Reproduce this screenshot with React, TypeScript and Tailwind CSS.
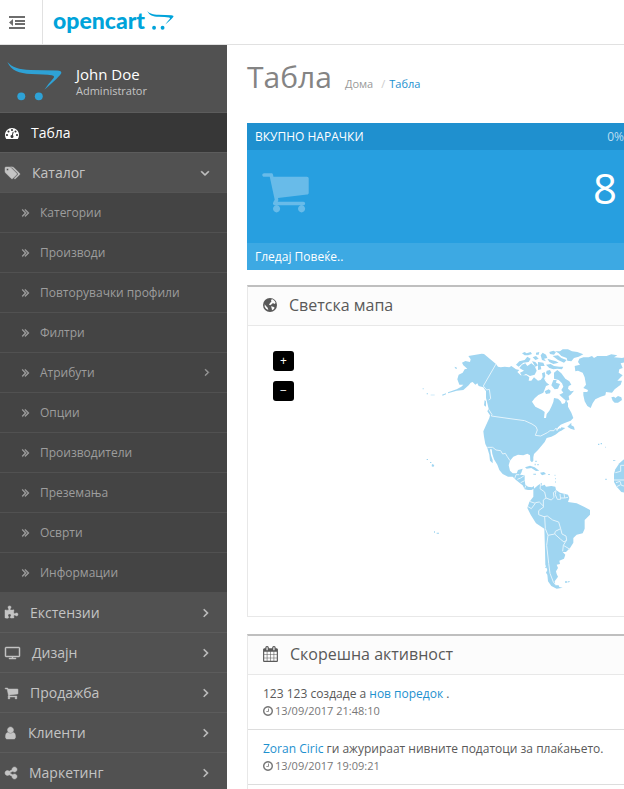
import React from "react";

interface Glyph {
  box: string;
  d: string;
}

interface MenuItem {
  label: string;
  icon: Glyph;
  width: string;
}

// Icon outlines, drawn on a 1792 unit em
const GLYPHS = {
  dashboard: {
    box: "0 0 1792 1792",
    d: "M384 1152q0-53-37.5-90.5t-90.5-37.5-90.5 37.5-37.5 90.5 37.5 90.5 90.5 37.5 90.5-37.5 37.5-90.5zm192-448q0-53-37.5-90.5t-90.5-37.5-90.5 37.5-37.5 90.5 37.5 90.5 90.5 37.5 90.5-37.5 37.5-90.5zm428 481l101-382q6-26-7.5-48.5t-38.5-29.5-48 6.5-30 39.5l-101 382q-60 5-107 43.5t-63 98.5q-20 77 20 146t117 89 146-20 89-117q16-60-6-117t-72-91zm660-33q0-53-37.5-90.5t-90.5-37.5-90.5 37.5-37.5 90.5 37.5 90.5 90.5 37.5 90.5-37.5 37.5-90.5zm-640-640q0-53-37.5-90.5t-90.5-37.5-90.5 37.5-37.5 90.5 37.5 90.5 90.5 37.5 90.5-37.5 37.5-90.5zm448 192q0-53-37.5-90.5t-90.5-37.5-90.5 37.5-37.5 90.5 37.5 90.5 90.5 37.5 90.5-37.5 37.5-90.5zm320 448q0 261-141 483-19 29-54 29h-1402q-35 0-54-29-141-221-141-483 0-182 71-348t191-286 286-191 348-71 348 71 286 191 191 286 71 348z",
  },
  tags: {
    box: "0 0 1920 1792",
    d: "M448 448q0-53-37.5-90.5t-90.5-37.5-90.5 37.5-37.5 90.5 37.5 90.5 90.5 37.5 90.5-37.5 37.5-90.5zm1067 576q0 53-37 90l-491 492q-39 37-91 37-53 0-90-37l-715-716q-38-37-64.5-101t-26.5-117v-416q0-52 38-90t90-38h416q53 0 117 26.5t102 64.5l715 714q37 39 37 91zm384 0q0 53-37 90l-491 492q-39 37-91 37-36 0-59-14t-53-45l470-470q37-37 37-90 0-52-37-91l-715-714q-38-38-102-64.5t-117-26.5h224q53 0 117 26.5t102 64.5l715 714q37 39 37 91z",
  },
  puzzle: {
    box: "91 0 1664 1792",
    d: "M1755 1083q0 81-44.5 135t-123.5 54q-41 0-77.5-17.5t-59-38-56.5-38-71-17.5q-110 0-110 124 0 39 16 115t15 115v5q-22 0-33 1-34 3-97.5 11.5t-115.5 13.5-98 5q-61 0-103-26.5t-42-83.5q0-37 17.5-71t38-56.5 38-59 17.5-77.5q0-79-54-123.5t-135-44.5q-84 0-143 45.5t-59 127.5q0 43 15 83t33.5 64.5 33.5 53 15 50.5q0 45-46 89-37 35-117 35-95 0-245-24-9-2-27.5-4t-27.5-4l-13-2q-1 0-3-1-2 0-2-1v-1024q2 1 17.5 3.5t34 5 21.5 3.5q150 24 245 24 80 0 117-35 46-44 46-89 0-22-15-50.5t-33.5-53-33.5-64.5-15-83q0-82 59-127.5t144-45.5q80 0 134 44.5t54 123.5q0 41-17.5 77.5t-38 59-38 56.5-17.5 71q0 57 42 83.5t103 26.5q64 0 180-15t163-17v2q-1 2-3.5 17.5t-5 34-3.5 21.5q-24 150-24 245 0 80 35 117 44 46 89 46 22 0 50.5-15t53-33.5 64.5-33.5 83-15q82 0 127.5 59t45.5 143z",
  },
  screen: {
    box: "0 0 1920 1792",
    d: "M1792 1248v-960q0-13-9.5-22.5t-22.5-9.5h-1600q-13 0-22.5 9.5t-9.5 22.5v960q0 13 9.5 22.5t22.5 9.5h1600q13 0 22.5-9.5t9.5-22.5zm128-960v960q0 66-47 113t-113 47h-736v128h352q14 0 23 9t9 23v64q0 14-9 23t-23 9h-832q-14 0-23-9t-9-23v-64q0-14 9-23t23-9h352v-128h-736q-66 0-113-47t-47-113v-960q0-66 47-113t113-47h1600q66 0 113 47t47 113z",
  },
  cart: {
    box: "64 0 1664 1792",
    d: "M704 1536q0 52-38 90t-90 38-90-38-38-90 38-90 90-38 90 38 38 90zm896 0q0 52-38 90t-90 38-90-38-38-90 38-90 90-38 90 38 38 90zm128-1088v512q0 24-16.5 42.5t-40.5 21.5l-1044 122q13 60 13 70 0 16-24 64h920q26 0 45 19t19 45-19 45-45 19h-1024q-26 0-45-19t-19-45q0-11 8-31.5t16-36 21.5-40 15.5-29.5l-177-823h-204q-26 0-45-19t-19-45 19-45 45-19h256q16 0 28.5 6.5t19.5 15.5 13 24.5 8 26 5.5 29.5 4.5 26h1201q26 0 45 19t19 45z",
  },
  user: {
    box: "256 0 1280 1792",
    d: "M1536 1399q0 109-62.5 187t-150.5 78h-854q-88 0-150.5-78t-62.5-187q0-85 8.5-160.5t31.5-152 58.5-131 94-89 134.5-34.5q131 128 313 128t313-128q76 0 134.5 34.5t94 89 58.5 131 31.5 152 8.5 160.5zm-256-887q0 159-112.5 271.5t-271.5 112.5-271.5-112.5-112.5-271.5 112.5-271.5 271.5-112.5 271.5 112.5 112.5 271.5z",
  },
  share: {
    box: "128 0 1536 1792",
    d: "M1344 1024q133 0 226.5 93.5t93.5 226.5-93.5 226.5-226.5 93.5-226.5-93.5-93.5-226.5q0-12 2-34l-360-180q-92 86-218 86-133 0-226.5-93.5t-93.5-226.5 93.5-226.5 226.5-93.5q126 0 218 86l360-180q-2-22-2-34 0-133 93.5-226.5t226.5-93.5 226.5 93.5 93.5 226.5-93.5 226.5-226.5 93.5q-126 0-218-86l-360 180q2 22 2 34t-2 34l360 180q92-86 218-86z",
  },
  angleRight: {
    box: "0 0 1792 1792",
    d: "M1171 960q0 13-10 23l-466 466q-10 10-23 10t-23-10l-50-50q-10-10-10-23t10-23l393-393-393-393q-10-10-10-23t10-23l50-50q10-10 23-10t23 10l466 466q10 10 10 23z",
  },
  angleDown: {
    box: "0 0 1792 1792",
    d: "M1395 736q0 13-10 23l-466 466q-10 10-23 10t-23-10l-466-466q-10-10-10-23t10-23l50-50q10-10 23-10t23 10l393 393 393-393q10-10 23-10t23 10l50 50q10 10 10 23z",
  },
  angles: {
    box: "300 0 1152 1792",
    d: "M979 960q0 13-10 23l-466 466q-10 10-23 10t-23-10l-50-50q-10-10-10-23t10-23l393-393-393-393q-10-10-10-23t10-23l50-50q10-10 23-10t23 10l466 466q10 10 10 23zm384 0q0 13-10 23l-466 466q-10 10-23 10t-23-10l-50-50q-10-10-10-23t10-23l393-393-393-393q-10-10-10-23t10-23l50-50q10-10 23-10t23 10l466 466q10 10 10 23z",
  },
  clock: {
    box: "128 0 1536 1792",
    d: "M1024 544v448q0 14-9 23t-23 9h-320q-14 0-23-9t-9-23v-64q0-14 9-23t23-9h224v-352q0-14 9-23t23-9h64q14 0 23 9t9 23zm416 352q0-148-73-273t-198-198-273-73-273 73-198 198-73 273 73 273 198 198 273 73 273-73 198-198 73-273zm224 0q0 209-103 385.5t-279.5 279.5-385.5 103-385.5-103-279.5-279.5-103-385.5 103-385.5 279.5-279.5 385.5-103 385.5 103 279.5 279.5 103 385.5z",
  },
  calendar: {
    box: "64 0 1664 1792",
    d: "M192 1664h288v-288h-288v288zm352 0h320v-288h-320v288zm-352-352h288v-320h-288v320zm352 0h320v-320h-320v320zm-352-384h288v-288h-288v288zm736 736h320v-288h-320v288zm-384-736h320v-288h-320v288zm768 736h288v-288h-288v288zm-384-352h320v-320h-320v320zm-352-864v-288q0-13-9.5-22.5t-22.5-9.5h-64q-13 0-22.5 9.5t-9.5 22.5v288q0 13 9.5 22.5t22.5 9.5h64q13 0 22.5-9.5t9.5-22.5zm736 864h288v-320h-288v320zm-384-384h320v-288h-320v288zm384 0h288v-288h-288v288zm32-480v-288q0-13-9.5-22.5t-22.5-9.5h-64q-13 0-22.5 9.5t-9.5 22.5v288q0 13 9.5 22.5t22.5 9.5h64q13 0 22.5-9.5t9.5-22.5zm384-64v1280q0 52-38 90t-90 38h-1408q-52 0-90-38t-38-90v-1280q0-52 38-90t90-38h128v-96q0-66 47-113t113-47h64q66 0 113 47t47 113v96h384v-96q0-66 47-113t113-47h64q66 0 113 47t47 113v96h128q52 0 90 38t38 90z",
  },
};

const CATALOG = [
  "Категории",
  "Производи",
  "Повторувачки профили",
  "Филтри",
  "Атрибути",
  "Опции",
  "Производители",
  "Преземања",
  "Осврти",
  "Информации",
];

const SECTIONS: MenuItem[] = [
  { label: "Екстензии", icon: GLYPHS.puzzle, width: "w-[13px]" },
  { label: "Дизајн", icon: GLYPHS.screen, width: "w-[15px]" },
  { label: "Продажба", icon: GLYPHS.cart, width: "w-[13px]" },
  { label: "Клиенти", icon: GLYPHS.user, width: "w-[11px]" },
  { label: "Маркетинг", icon: GLYPHS.share, width: "w-[12px]" },
];

function Icon({
  glyph,
  className,
  weight = 0,
}: {
  glyph: Glyph;
  className: string;
  weight?: number;
}) {
  return (
    <svg
      viewBox={glyph.box}
      className={`shrink-0 overflow-visible ${className}`}
      fill="currentColor"
      stroke="currentColor"
      strokeWidth={weight}
      aria-hidden="true"
    >
      <path d={glyph.d} />
    </svg>
  );
}

function CartMark({ className }: { className: string }) {
  return (
    <svg viewBox="0 0 164 118" className={className} fill="currentColor" aria-hidden="true">
      <path d="M0 0C14 16 34 23 70 24L150 26Q165 27 163 34Q160 42 112 84Q122 68 138 51Q146 42 134 40Q112 37 72 36C34 35 12 26 0 0Z" />
      <circle cx="42" cy="104" r="12" />
      <circle cx="95" cy="104" r="12" />
    </svg>
  );
}

function Globe() {
  return (
    <svg viewBox="0 0 42 42" className="h-3.5 w-3.5" aria-hidden="true">
      <circle cx="21" cy="21" r="21" fill="#595959" />
      <path
        d="M24 5L29 4L35 9L38 15L34 18L30 15L26 19L22 22L18 20L21 15L25 11ZM24 25L31 26L35 29L32 34L27 37L26 31ZM5 19L9 24L14 29L16 36L9 32L5 26Z"
        fill="#fcfcfc"
      />
    </svg>
  );
}

function Sidebar() {
  return (
    <aside className="w-[227px] shrink-0 bg-[#515151]">
      <div className="flex h-17 border-b border-[#5c5c5c] pl-[7px] pt-[17px]">
        <CartMark className="h-[39px] w-[55px] text-[#2ea2d6]" />
        <div className="pl-3.5 pt-0.5">
          <h4 className="text-[15px] leading-5 text-white">John Doe</h4>
          <small className="block text-[11px] leading-3.5 text-[#c4c4c4]">Administrator</small>
        </div>
      </div>
      <nav className="text-sm text-[#c4c4c4]">
        <a
          href="#dashboard"
          className="flex h-10 items-center gap-3 border-b border-[#5c5c5c] bg-[#373737] pl-[5px] text-white"
        >
          <Icon glyph={GLYPHS.dashboard} className="h-3.5 w-3.5" />
          Табла
        </a>
        <a
          href="#catalog"
          className="flex h-10 items-center gap-3 border-b border-[#555555] pl-[5px] pr-[15px]"
        >
          <Icon glyph={GLYPHS.tags} className="h-3.5 w-[15px]" weight={60} />
          Каталог
          <Icon glyph={GLYPHS.angleDown} className="ml-auto h-3.5 w-3.5" weight={80} />
        </a>
        <ul className="bg-[#444444] text-xs text-[#9d9d9d]">
          {CATALOG.map((label) => (
            <li key={label}>
              <a
                href="#catalog"
                className="flex h-10 items-center gap-2.5 border-b border-[#515151] pl-[21px] pr-3.5"
              >
                <Icon glyph={GLYPHS.angles} className="h-3.5 w-[9px] pb-px" weight={80} />
                {label}
                {label === "Атрибути" && (
                  <Icon glyph={GLYPHS.angleRight} className="ml-auto h-3.5 w-3 pb-0.5" weight={80} />
                )}
              </a>
            </li>
          ))}
        </ul>
        {SECTIONS.map((item) => (
          <a
            key={item.label}
            href="#section"
            className="flex h-10 items-center gap-3 border-b border-[#5c5c5c] pl-[5px] pr-3.5"
          >
            <Icon glyph={item.icon} className={`h-3.5 ${item.width}`} weight={60} />
            {item.label}
            <Icon glyph={GLYPHS.angleRight} className="ml-auto h-4 w-3.5 pb-px" weight={80} />
          </a>
        ))}
      </nav>
    </aside>
  );
}

// Land and borders share one grid, three units to a pixel
function WorldMap() {
  return (
    <svg
      viewBox="-486 -42 1149 870"
      preserveAspectRatio="xMinYMin slice"
      className="block h-[290px] w-full"
      role="img"
      aria-label="Светска мапа"
    >
      <g fill="#9fd5f1">
        <path d="M175 48L215 41L222 42L258 72L264 80L272 82L284 80L298 82L304 78L318 88L328 90L322 96L332 106L350 106L358 112L356 122L364 122L372 112L384 122L392 120L398 112L396 100L404 96L406 108L402 118L410 128L418 134L408 138L400 158L385 165L374 175L366 185L376 200L396 210L404 216L402 234L408 234L410 222L418 212L424 200L430 186L432 174L444 176L452 184L456 192L464 190L468 180L474 190L474 200L484 218L490 234L482 242L466 248L452 254L444 262L438 272L450 264L452 270L444 278L436 284L424 290L410 294L404 306L394 318L384 330L372 342L370 352L370 362L366 367L361 362L360 346L352 341L340 346L324 344L310 350L300 362L296 376L300 392L308 400L320 400L324 390L338 386L334 398L330 404L344 406L344 420L346 434L354 440L366 442L372 438L372 446L364 450L354 450L344 448L338 436L330 430L318 420L308 410L294 410L278 402L268 390L262 374L252 358L247 342L245 328L240 328L243 346L248 360L248 370L240 362L238 344L232 324L226 312L222 290L220 274L228 256L238 234L240 226L232 214L236 206L232 190L228 174L228 154L220 142L206 138L202 130L196 134L188 126L182 128L176 136L160 150L140 152L114 160L114 157L140 148L154 140L160 134L148 134L142 118L146 104L158 98L164 88L172 86L160 76L156 68L166 63L180 66L182 58Z" />
        <path d="M370 448L384 436L396 428L394 438L404 434L408 440L424 438L436 440L438 450L450 458L474 464L478 474L474 486L500 490L522 500L540 510L540 524L524 540L524 566L518 580L500 584L490 594L490 608L480 624L468 636L458 636L466 644L462 656L448 662L450 672L440 674L444 684L438 694L440 702L444 710L434 724L436 736L446 736L448 741L458 743L440 746L424 738L414 724L412 704L408 698L412 690L406 674L405 630L403 566L378 550L362 524L352 504L358 486L370 470Z" />
        <path d="M494 78L510 74L504 66L508 56L520 52L536 52L546 48L552 54L562 48L590 48L604 43L622 46L612 52L636 54L650 50L650 66L632 70L638 84L628 88L626 98L638 106L622 122L636 122L632 134L614 148L606 158L588 156L586 166L572 170L556 178L548 190L542 204L532 198L524 184L520 166L520 156L532 156L534 150L520 144L528 134L524 112L518 98L504 92L496 94Z" />
        {/* Canadian Arctic */}
        <path d="M318 74L328 64L344 60L352 50L362 56L356 66L340 68L326 80ZM336 74L346 70L352 78L364 70L374 78L380 92L374 104L360 108L348 102L336 108L330 98L342 92L328 84ZM336 40L344 36L350 40L362 36L366 42L354 46L344 46ZM368 52L378 48L386 56L376 60ZM366 64L376 66L384 76L376 80ZM378 38L388 36L386 44L378 44ZM392 46L398 38L408 44L412 54L402 56L408 64L396 60ZM384 66L400 68L404 78L392 78L394 88L384 90ZM408 74L422 72L432 78L448 80L460 80L456 88L442 86L430 88L418 84ZM412 56L424 60L438 64L446 68L430 72L418 66ZM418 36L430 32L438 36L432 44L420 42ZM428 48L444 46L454 54L470 60L462 68L444 60ZM436 34L450 34L458 28L474 28L486 34L502 36L520 43L506 50L492 54L484 64L472 62L470 54L454 48L446 40Z" />
        <path d="M410 92L420 90L424 98L416 106L408 100ZM432 98L442 90L454 100L466 116L478 124L484 134L476 138L474 146L482 154L492 152L482 164L476 168L478 180L468 182L456 172L448 164L460 158L454 150L460 140L456 130L446 120L432 116ZM430 120L440 120L438 128L450 132L444 146L434 148L424 136ZM404 154L416 148L422 152L420 160L408 162ZM394 122L406 118L402 128L394 130Z" />
        <path d="M604 172L612 170L616 174L624 168L634 172L636 180L624 188L614 188L608 182ZM472 260L484 248L484 256L492 260L494 270L482 266ZM444 276L454 262L466 264L454 272ZM345 382L360 377L374 382L388 392L378 393L364 384L350 386ZM390 398L402 396L408 402L396 406ZM370 401L378 401L378 404L370 404ZM414 402L420 402L420 404L414 404Z" />
        <path d="M642 358L628 370L616 388L612 402L612 426L620 440L634 456L662 462V350Z" />
        {/* Pacific and Atlantic islands */}
        <path d="M66 372L73 375L70 381L65 379ZM60 366H64V369H60ZM50 357H54V360H50ZM134 80L141 83L140 87L135 85ZM38 145H41V148H38ZM50 160H54V163H50ZM62 164H74V166H62ZM96 164L108 160V163L98 167ZM224 180L228 184V200L222 196ZM72 574H75V578H72ZM80 578H87V581H80ZM465 724H472V728H465ZM474 723L480 724L476 728ZM406 680H410V684H406ZM564 311H568V315H564ZM572 309H576V313H572ZM586 320H588V323H586ZM376 362H380V366H376ZM382 372H386V376H382ZM374 371H377V376H374ZM434 404H436V408H434ZM436 414H438V418H436ZM436 424H438V428H436ZM609 361H616V363H609ZM586 416H590V420H586Z" />
      </g>
      <g fill="none" stroke="#e4f4fc" strokeWidth="3" strokeLinejoin="round">
        <path d="M258 72L220 138L230 150L238 148L242 176L236 180M236 208L246 224L244 228L300 236L344 242L366 252L378 260L382 270L376 286L392 288L412 278L420 272L432 272L438 264L442 272" />
        <path d="M232 322L248 322L258 330L272 332L278 342L286 340L292 350L300 362M314 416L318 404L328 404M322 418L332 414L344 406M332 428L344 422M344 446L348 436" />
        <path d="M392 430L390 446L404 456L408 474L400 480L400 500M408 474L424 480L432 472L430 458L438 452M438 452L436 464L442 478L452 478L450 462M452 474L464 474L462 460M464 474L474 472M358 484L376 490L364 506L354 500M376 488L388 486L402 500L386 512L386 524L402 530L412 528L428 540L446 546L452 566L436 574L434 582L414 586L406 566L404 530M452 566L456 582L468 588L470 600L462 606L452 598L434 582M470 600L460 616L458 634M460 616L480 628M414 586L410 616L416 670L420 700L430 726L436 734" />
        <path d="M642 376H632V394L616 398M612 420H642M618 428L630 424L634 436L642 438M620 440L632 434" />
      </g>
    </svg>
  );
}

function Panel({
  title,
  icon,
  children,
}: {
  title: string;
  icon: React.ReactNode;
  children: React.ReactNode;
}) {
  return (
    <section className="mb-[17px] border border-t-2 border-[#e8e8e8] border-t-[#bfbfbf]">
      <div className="flex h-[39px] items-center gap-3 border-b border-[#e8e8e8] bg-[#fcfcfc] pb-0.5 pl-[15px] text-[#595959]">
        {icon}
        <h3 className="text-base font-normal">{title}</h3>
      </div>
      {children}
    </section>
  );
}

function Activity({ time, children }: { time: string; children: React.ReactNode }) {
  return (
    <li className="h-[55px] border-b border-[#dddddd] pl-[15px] pt-2.5 text-[#595959]">
      <p className="text-xs leading-4.5">{children}</p>
      <small className="flex items-center gap-0.5 text-[11px] leading-4 text-[#777777]">
        <Icon glyph={GLYPHS.clock} className="h-3 w-2.5" />
        {time}
      </small>
    </li>
  );
}

export default function App() {
  return (
    <div className="h-screen overflow-hidden bg-white font-['Open_Sans','Noto_Sans',sans-serif] text-xs">
      <header className="flex h-[45px] border-b border-[#e1e1e1]">
        <button
          type="button"
          aria-label="Menu"
          className="flex w-[43px] items-center justify-center border-r border-[#e1e1e1] pr-2"
        >
          <svg viewBox="0 0 16 13" className="h-[13px] w-4" fill="#6d6d6d" aria-hidden="true">
            <path d="M0 0H16V2H0ZM6 4H16V6H6ZM6 7H16V9H6ZM0 11H16V13H0ZM4 3V10L0 6.5Z" />
          </svg>
        </button>
        <a href="#home" className="flex pl-2.5 text-[#00a3da]">
          <span className="font-['Lato',sans-serif] text-[23px] font-black leading-10">
            opencart
          </span>
          <CartMark className="ml-0.5 mt-[11px] h-[19px] w-[27px]" />
        </a>
      </header>
      <div className="flex">
        <Sidebar />
        {/* Dashboard runs a little past the right edge */}
        <main className="-mr-2 min-w-0 flex-1 pl-5">
          <div className="flex h-[78px] items-baseline pt-3">
            <h1 className="text-3xl font-normal leading-10 text-[#848484]">Табла</h1>
            <ol className="flex gap-1 pl-[13px] text-[11px]">
              <li>
                <a href="#home" className="text-[#999999]">
                  Дома
                </a>
              </li>
              <li className="pl-1 text-[#cccccc]">/</li>
              <li>
                <a href="#dashboard" className="text-[#1e91cf]">
                  Табла
                </a>
              </li>
            </ol>
          </div>

          <section className="mb-[15px] bg-[#279fe0] text-white">
            <div className="flex h-[27px] items-center justify-between bg-[#1f90cf] px-2">
              <h2>ВКУПНО НАРАЧКИ</h2>
              <span className="text-[#bcdef1]">0%</span>
            </div>
            <div className="flex h-[93px] justify-between px-[15px]">
              <Icon glyph={GLYPHS.cart} className="mt-4 h-[50px] w-[47px] text-[#68bbe9]" />
              <span className="pt-3.5 text-[42px] leading-12">8</span>
            </div>
            <div className="flex h-[27px] items-center bg-[#3da9e3] px-2">
              <a href="#orders" className="font-medium">
                Гледај Повеќе..
              </a>
            </div>
          </section>

          <Panel title="Светска мапа" icon={<Globe />}>
            <div className="relative">
              <WorldMap />
              <div className="absolute left-[25px] top-[25px] flex flex-col gap-2.5 text-white">
                <button type="button" className="h-5 w-[21px] rounded-[3px] bg-black">
                  +
                </button>
                <button type="button" className="h-5 w-[21px] rounded-[3px] bg-black">
                  −
                </button>
              </div>
            </div>
          </Panel>

          <Panel
            title="Скорешна активност"
            icon={<Icon glyph={GLYPHS.calendar} className="h-4 w-[15px]" />}
          >
            <ul>
              <Activity time="13/09/2017 21:48:10">
                123 123 создаде а{" "}
                <a href="#order" className="text-[#1e91cf]">
                  нов поредок
                </a>{" "}
                .
              </Activity>
              <Activity time="13/09/2017 19:09:21">
                <a href="#customer" className="text-[#1e91cf]">
                  Zoran Ciric
                </a>{" "}
                ги ажурираат нивните податоци за плаќањето.
              </Activity>
              <li className="h-[55px]" />
            </ul>
          </Panel>
        </main>
      </div>
    </div>
  );
}
